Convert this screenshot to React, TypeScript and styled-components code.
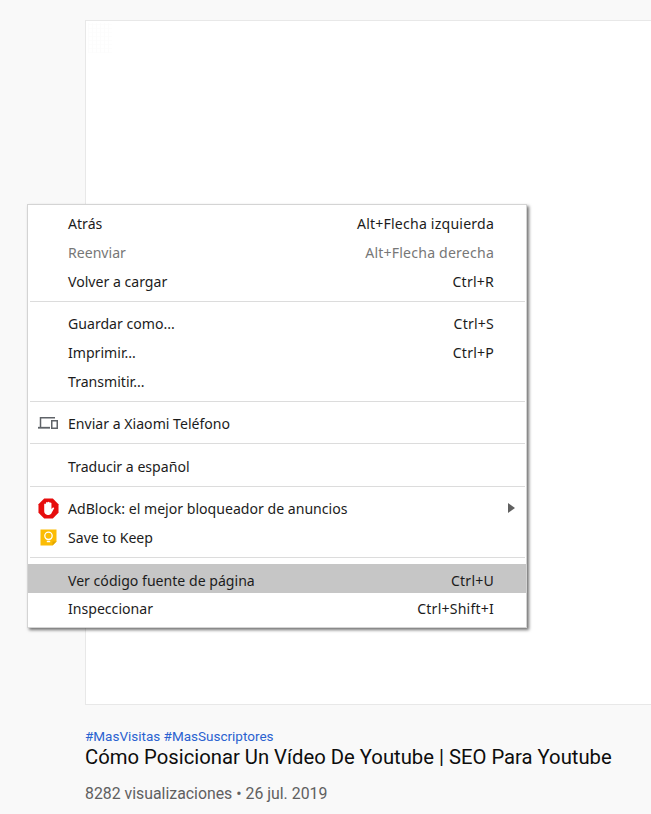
import React from 'react'
import styled, {createGlobalStyle} from 'styled-components'

const Global = createGlobalStyle`
  html,body{
    margin:0;
    padding:0;
    background:#f9f9f9;
    overflow:hidden;
  }
`
const Page = styled.div`
  position:relative;
  width:651px;
  height:814px;
  overflow:hidden;
  padding:20px 0 0 85px;
  box-sizing:border-box;
  background:#f9f9f9;
`
const Player = styled.div`
  position:relative;
  height:685px;
  box-sizing:border-box;
  background:white;
  border:1px solid #e8e8e8;
  border-right:none;
  overflow:hidden;
`
const Grid = styled.div`
  position:absolute;
  left:2px;
  top:2px;
  width:24px;
  height:30px;
  background-image:
    repeating-linear-gradient(90deg,#fcfcfc 0,#fcfcfc 1px,transparent 1px,transparent 4px),
    repeating-linear-gradient(0deg,#fdfdfd 0,#fdfdfd 1px,transparent 1px,transparent 4px);
`
const Info = styled.div`
  font-family:Roboto,sans-serif;
  padding-top:23px;
`
const Tags = styled.div`
  font-size:13.5px;
  line-height:16px;
  color:#2a62d0;
`
const Title = styled.h1`
  margin:0;
  font-size:20.25px;
  line-height:26px;
  font-weight:400;
  color:#0d0d0d;
  white-space:nowrap;
`
const Meta = styled.div`
  margin-top:14px;
  font-size:15.85px;
  line-height:20px;
  color:#606060;
  white-space:nowrap;
`
const Menu = styled.div`
  position:absolute;
  left:27px;
  top:204px;
  width:500px;
  box-sizing:border-box;
  padding:3px 0 5px;
  background:white;
  border:1px solid #d4d4d4;
  box-shadow:2px 2px 3px rgba(0,0,0,.55);
  font-family:"Noto Sans",sans-serif;
  font-size:14.1px;
  color:#1c1c1c;
`
const Row = styled.div<{$disabled?:boolean;$active?:boolean;$low?:boolean}>`
  position:relative;
  display:flex;
  justify-content:space-between;
  height:29px;
  line-height:${p=>p.$low?'33px':'31px'};
  padding:0 32px 0 40px;
  white-space:nowrap;
  color:${p=>p.$disabled?'#777':'#1c1c1c'};
  background:${p=>p.$active?'#c6c6c6':'transparent'};
`
const Shortcut = styled.span`
  color:inherit;
  letter-spacing:.2px;
`
const Sep = styled.div<{$wide?:boolean}>`
  height:1px;
  margin:${p=>p.$wide?'7px':'6px'} 1px 6px 2px;
  background:#dcdcdc;
`
const IconSlot = styled.span`
  position:absolute;
  left:8px;
  top:3px;
  width:24px;
  height:24px;
  display:flex;
  align-items:center;
  justify-content:center;
`
const Arrow = styled.span`
  position:absolute;
  right:11px;
  top:10px;
  width:0;
  height:0;
  border-left:7px solid #606060;
  border-top:5px solid transparent;
  border-bottom:5px solid transparent;
`

function DevicesIcon() {
  return (
    <svg width="20" height="14" viewBox="0 0 20 14">
      <path d="M2.500 11V1.750H17" stroke="#5f6368" strokeWidth="1.500" fill="none"/>
      <path d="M0 11.750H12" stroke="#5f6368" strokeWidth="1.800" fill="none"/>
      <rect x="13.750" y="4.750" width="5.500" height="7.500" stroke="#5f6368" strokeWidth="1.500" fill="none"/>
    </svg>
  )
}

function AdBlockIcon() {
  return (
    <svg width="21" height="21" viewBox="0 0 22 22">
      <polygon points="6.500,0.500 15.500,0.500 21.500,6.500 21.500,15.500 15.500,21.500 6.500,21.500 0.500,15.500 0.500,6.500" fill="#e60d0d"/>
      <path d="M6.500 11V6.500a1 1 0 0 1 1.900 0V5a1 1 0 0 1 1.900 0v-.5a1 1 0 0 1 1.900 0V5.500a1 1 0 0 1 1.900 0v6l1.500-1.500c.9-.5 1.700.3 1.200 1l-3 5.500c-.6.8-1.400 1.200-2.400 1.200H10c-2 0-3.500-1.500-3.500-3.700Z" fill="#fff"/>
    </svg>
  )
}

function KeepIcon() {
  return (
    <svg width="17" height="17" viewBox="0 0 17 17">
      <path d="M0.500 0.500H16.500V12.500L12.500 16.500H0.500Z" fill="#fbbc04"/>
      <path d="M16.500 12.500L12.500 16.500V12.500Z" fill="#e2a600"/>
      <circle cx="8.500" cy="6.800" r="3.700" fill="none" stroke="#fff" strokeWidth="1.300"/>
      <path d="M6.800 12.500H10.200" stroke="#fff" strokeWidth="1.500"/>
    </svg>
  )
}

export default function App() {
  return (
    <Page>
      <Global/>
      <Player><Grid/></Player>
      <Info>
        <Tags>#MasVisitas #MasSuscriptores</Tags>
        <Title>Cómo Posicionar Un Vídeo De Youtube | SEO Para Youtube</Title>
        <Meta>8282 visualizaciones • 26 jul. 2019</Meta>
      </Info>
      <Menu>
        <Row>Atrás<Shortcut>Alt+Flecha izquierda</Shortcut></Row>
        <Row $disabled>Reenviar<Shortcut>Alt+Flecha derecha</Shortcut></Row>
        <Row>Volver a cargar<Shortcut>Ctrl+R</Shortcut></Row>
        <Sep/>
        <Row>Guardar como...<Shortcut>Ctrl+S</Shortcut></Row>
        <Row>Imprimir...<Shortcut>Ctrl+P</Shortcut></Row>
        <Row>Transmitir...</Row>
        <Sep/>
        <Row><IconSlot><DevicesIcon/></IconSlot>Enviar a Xiaomi Teléfono</Row>
        <Sep/>
        <Row $low>Traducir a español</Row>
        <Sep $wide/>
        <Row><IconSlot><AdBlockIcon/></IconSlot>AdBlock: el mejor bloqueador de anuncios<Arrow/></Row>
        <Row><IconSlot><KeepIcon/></IconSlot>Save to Keep</Row>
        <Sep/>
        <Row $active $low>Ver código fuente de página<Shortcut>Ctrl+U</Shortcut></Row>
        <Row>Inspeccionar<Shortcut>Ctrl+Shift+I</Shortcut></Row>
      </Menu>
    </Page>
  )
}
